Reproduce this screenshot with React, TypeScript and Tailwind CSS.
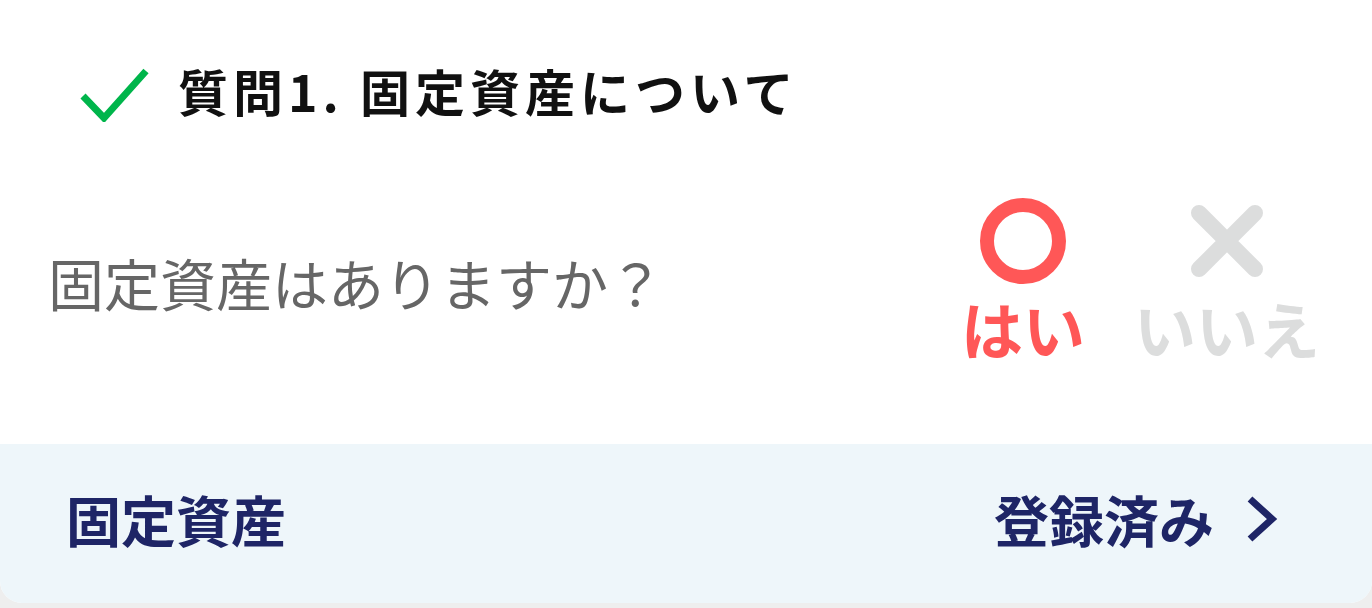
import React from 'react';

const font = { fontFamily: '"Noto Sans CJK JP", "Noto Sans", sans-serif' };

export default function App() {
  return (
    <div className="min-h-[608px] w-full bg-[#eeeeee]" style={font}>
      <div className="overflow-hidden rounded-b-[22px] bg-white">
        {/* Title */}
        <div className="flex h-[176px] items-start pl-[80px] pt-[52px]">
          <svg width="70" height="54" viewBox="0 0 70 54" className="mt-[16px]">
            <path d="M3 28 L24 50 L66 3" fill="none" stroke="#00b54b" strokeWidth="7" />
          </svg>
          <h1 className="ml-[28px] text-[50px] font-bold leading-[76px] tracking-[5px] text-[#111111]">
            質問1. 固定資産について
          </h1>
        </div>

        {/* Question */}
        <div className="flex h-[268px] items-start justify-between pl-[48px] pr-[50px]">
          <p className="mt-[70px] text-[56px] leading-[72px] text-[#666666]">固定資産はありますか？</p>
          <div className="flex gap-[44px] pt-[20px]">
            <button className="flex w-[130px] flex-col items-center">
              <svg width="90" height="90" viewBox="0 0 90 90">
                <circle cx="45" cy="45" r="36" fill="none" stroke="#ff5757" strokeWidth="14" />
              </svg>
              <span className="mt-[8px] text-[62px] font-bold leading-[68px] text-[#ff5757]">はい</span>
            </button>
            <button className="flex w-[190px] flex-col items-center">
              <svg width="90" height="90" viewBox="0 0 90 90">
                <path d="M17 17 L73 73 M73 17 L17 73" fill="none" stroke="#dcdddd" strokeWidth="16" strokeLinecap="round" />
              </svg>
              <span className="mt-[8px] text-[62px] font-bold leading-[68px] text-[#dcdddd]">いいえ</span>
            </button>
          </div>
        </div>

        {/* Footer row */}
        <div className="flex h-[159px] items-center justify-between bg-[#eef6fa] pb-[10px] pl-[66px] pr-[94px]">
          <span className="text-[55px] font-bold text-[#1e2566]">固定資産</span>
          <div className="flex items-center gap-[30px]">
            <span className="text-[55px] font-bold text-[#1e2566]">登録済み</span>
            <svg width="34" height="48" viewBox="0 0 34 48">
              <path d="M6 4 L28 24 L6 44" fill="none" stroke="#1e2566" strokeWidth="7" />
            </svg>
          </div>
        </div>
      </div>
    </div>
  );
}
